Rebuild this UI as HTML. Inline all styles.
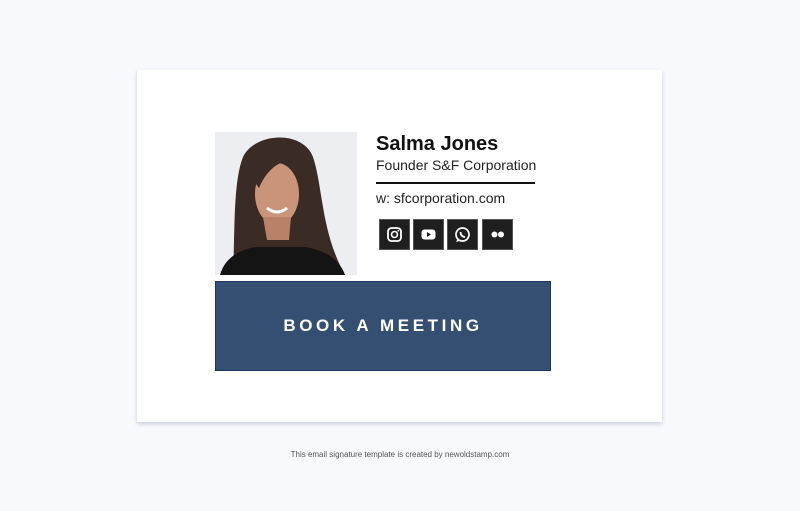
<!DOCTYPE html>
<html><head><style>
body{margin:0;width:800px;height:511px;background:#f8f9fd;font-family:"Liberation Sans",sans-serif;position:relative;overflow:hidden}
.card{position:absolute;left:137px;top:70px;width:525px;height:352px;background:#fff;box-shadow:0 2px 4px rgba(120,130,170,.35)}
.photo{position:absolute;left:215px;top:132px;width:142px;height:143px;background:#eceef1;overflow:hidden}
.t{position:absolute;color:#111;white-space:nowrap}
.ic{position:absolute;top:219px;width:29px;height:29px;background:#1f1f1f;border:1px solid #555}
.ic svg{position:absolute;left:0;top:0}
.btn{position:absolute;left:215px;top:281px;width:334px;height:88px;background:#354f72;border:1px solid #1e3560;color:#fff;font-weight:bold;font-size:17px;letter-spacing:3.6px;text-align:center;line-height:88px}
.foot{position:absolute;top:450px;left:0;width:800px;text-align:center;font-size:8px;color:#555}
</style></head><body>
<div class="card"></div>
<div class="photo">
<svg width="142" height="143" viewBox="0 0 142 143">
<path d="M18 143 C20 100 18 50 28 25 C40 0 88 -2 98 25 C108 55 106 100 130 143 Z" fill="#3a2b24"/>
<path d="M5 143 C10 125 25 118 40 115 L90 115 C110 118 125 128 130 143 Z" fill="#141414"/>
<ellipse cx="62" cy="62" rx="22" ry="31" fill="#c99479"/>
<path d="M48 85 L76 85 L74 108 L52 108Z" fill="#b98168"/>
<path d="M36 45 C40 20 68 15 86 30 C76 26 56 28 44 56Z" fill="#3a2b24"/>
<path d="M52 76 Q62 84 72 76" stroke="#fff" stroke-width="3" fill="none"/>
</svg>
</div>
<div class="t" style="left:376px;top:133px;font-size:20px;font-weight:bold">Salma Jones</div>
<div class="t" style="left:376px;top:157px;font-size:14px;color:#222">Founder S&amp;F Corporation</div>
<div style="position:absolute;left:376px;top:182px;width:159px;height:2px;background:#111"></div>
<div class="t" style="left:376px;top:190px;font-size:14px;color:#222">w: sfcorporation.com</div>
<div class="ic" style="left:379px"><svg width="29" height="29"><rect x="8" y="8" width="13" height="13" rx="3.5" fill="none" stroke="#fff" stroke-width="1.8"/><circle cx="14.5" cy="14.5" r="3" fill="none" stroke="#fff" stroke-width="1.6"/><circle cx="18.3" cy="10.7" r=".9" fill="#fff"/></svg></div>
<div class="ic" style="left:413px"><svg width="29" height="29"><rect x="7.5" y="9.5" width="14" height="10" rx="3" fill="#fff"/><path d="M13 12 L17 14.5 L13 17Z" fill="#1f1f1f"/></svg></div>
<div class="ic" style="left:447px"><svg width="29" height="29"><circle cx="14.5" cy="14.5" r="6.5" fill="none" stroke="#fff" stroke-width="1.7"/><path d="M9.5 19 L8 22 L11.5 21" fill="#fff"/><path d="M12.5 12 Q12.5 16.5 17 17" stroke="#fff" stroke-width="1.8" fill="none"/></svg></div>
<div class="ic" style="left:482px"><svg width="29" height="29"><circle cx="11.5" cy="14.5" r="3" fill="#fff"/><circle cx="18" cy="14.5" r="3" fill="#fff"/></svg></div>
<div class="btn">BOOK A MEETING</div>
<div class="foot">This email signature template is created by newoldstamp.com</div>
</body></html>
